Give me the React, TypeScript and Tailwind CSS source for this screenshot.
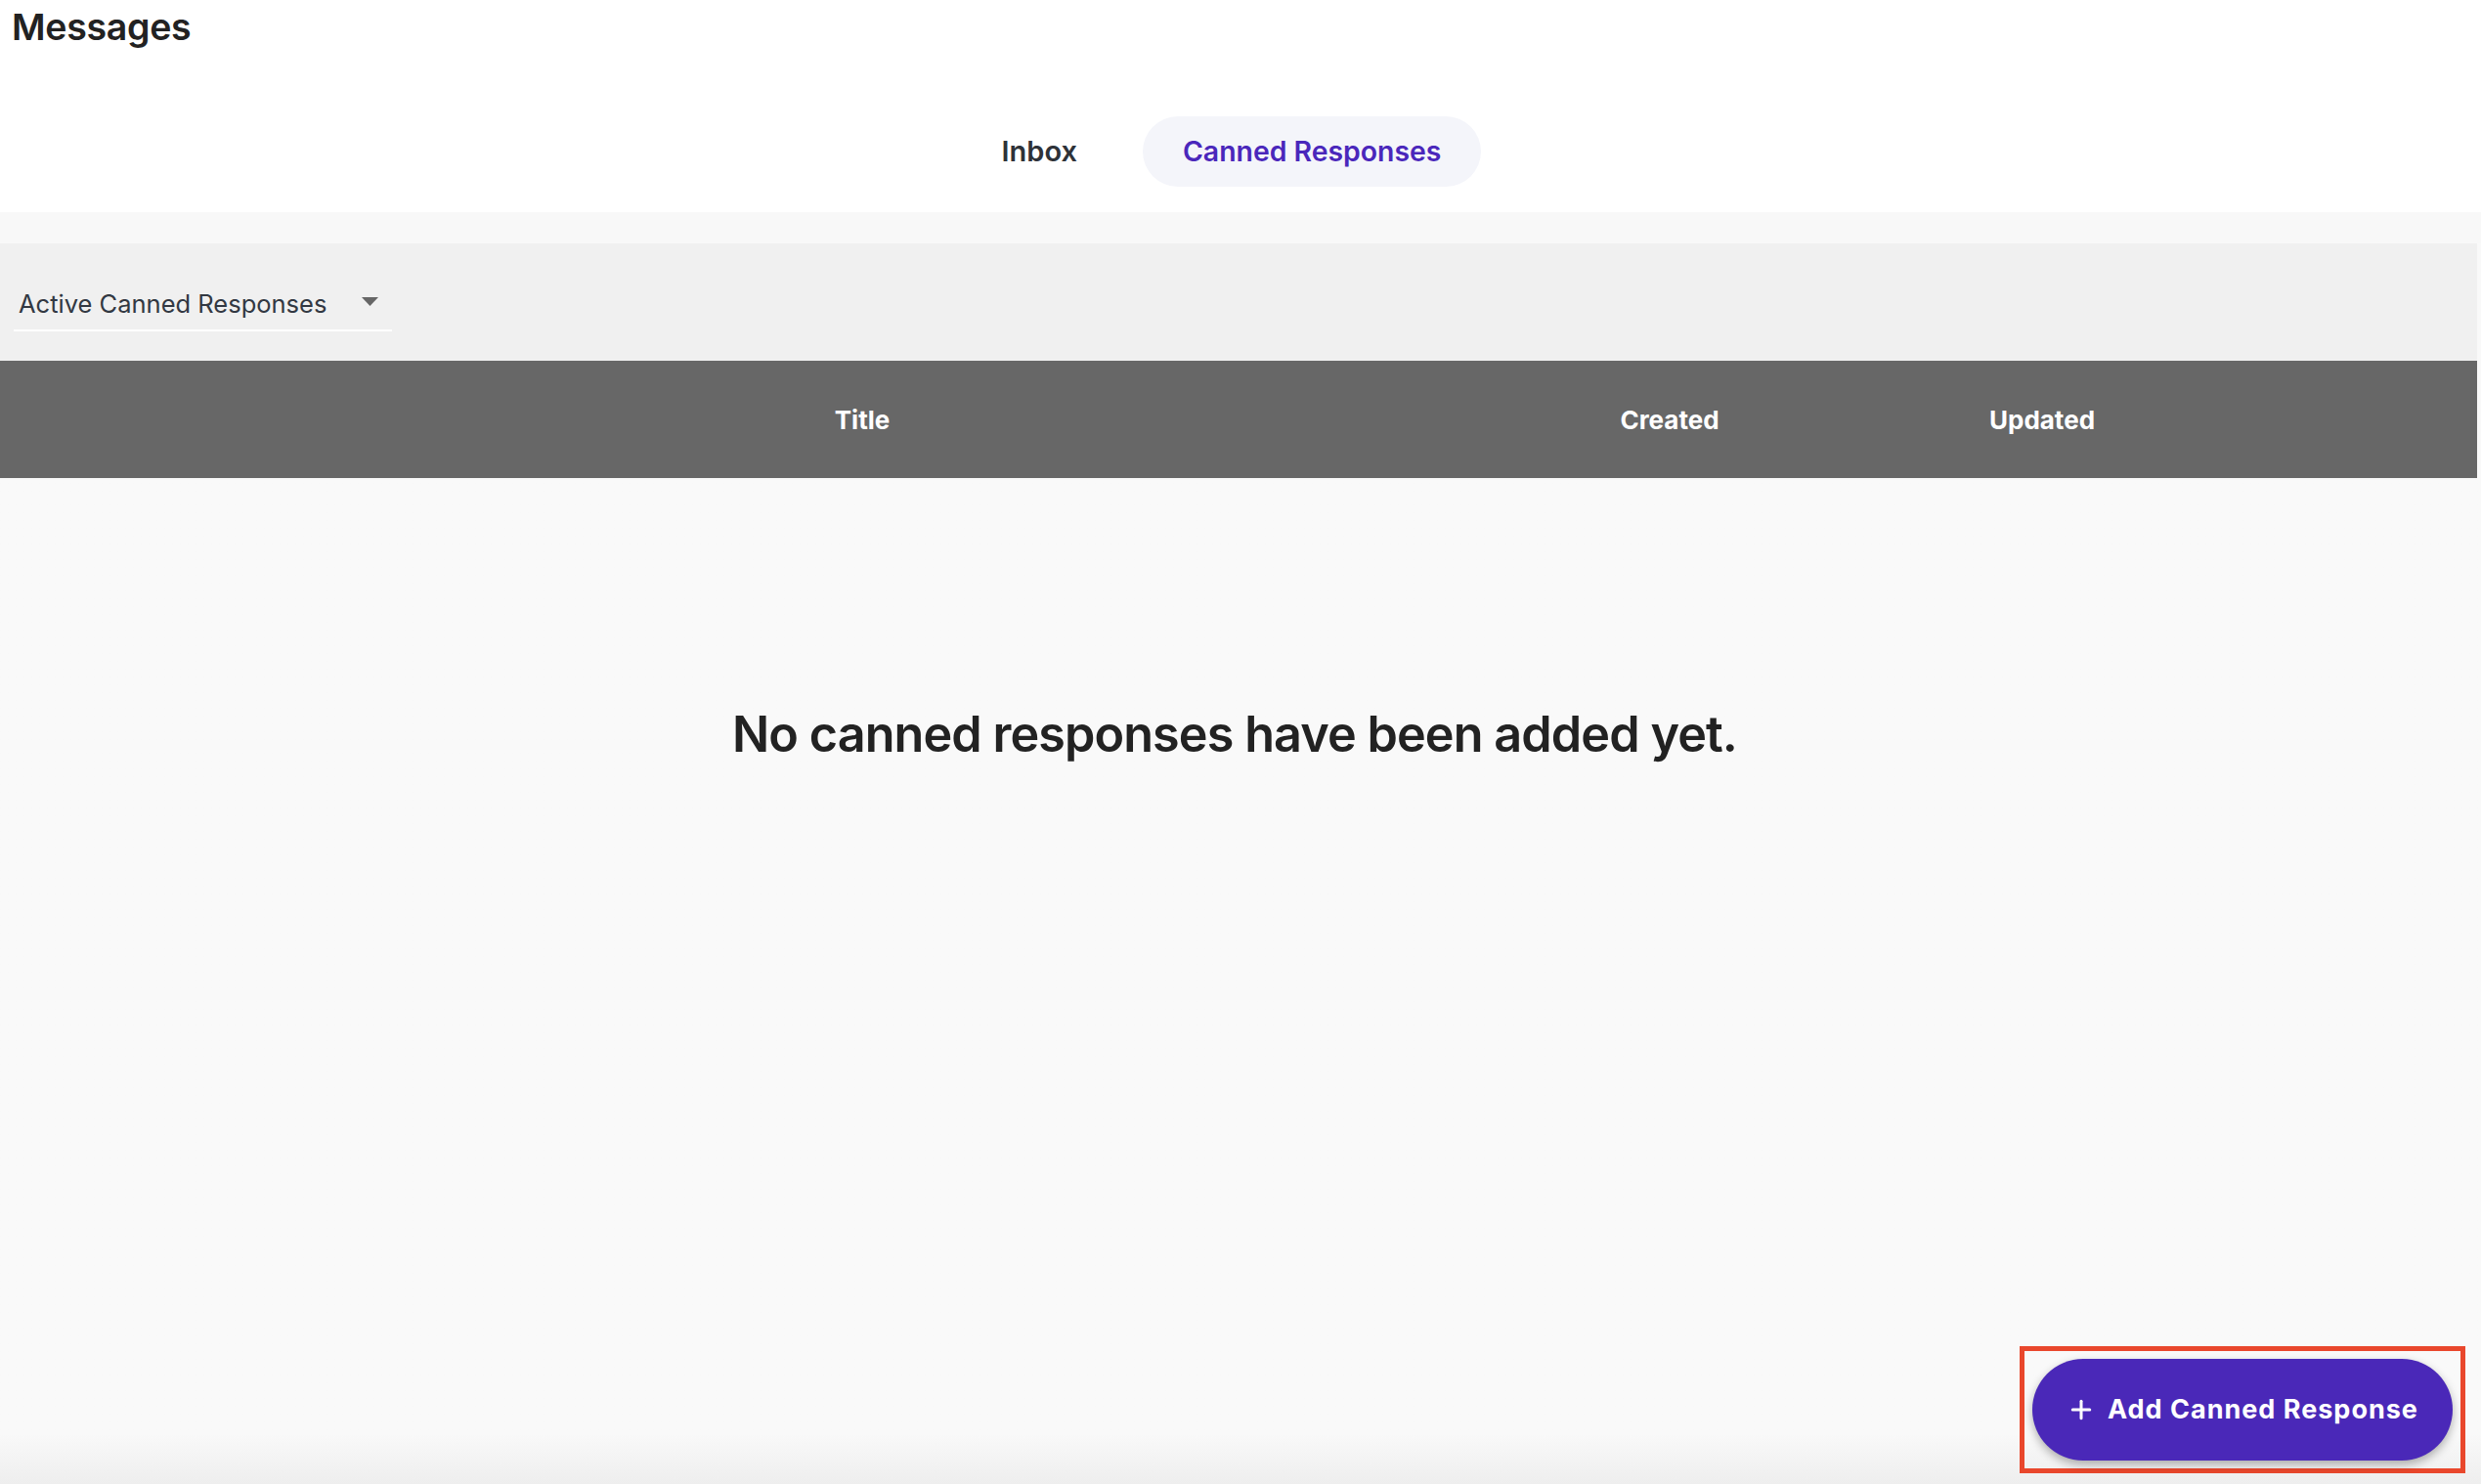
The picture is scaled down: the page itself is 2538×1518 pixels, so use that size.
import { Plus } from "lucide-react";

const font = { fontFamily: "Inter, 'Liberation Sans', sans-serif" };

export default function App() {
  return (
    <div
      className="relative flex h-[1518px] w-full flex-col overflow-hidden bg-[#f9f9f9]"
      style={font}
    >
      {/* Header */}
      <div className="h-[217px] bg-white">
        <h1 className="pl-[12px] pt-[4px] text-[37.5px] font-semibold leading-[48px] tracking-[-0.3px] text-[#222222]">
          Messages
        </h1>
        <div className="mt-[67px] flex items-center justify-center gap-[25px] pr-[40px]">
          <button className="flex h-[72px] items-center rounded-full px-[42px] text-[29px] font-semibold text-[#2e3238]">
            Inbox
          </button>
          <button className="flex h-[72px] items-center rounded-full bg-[#f4f5fa] px-[41px] text-[28.4px] font-semibold text-[#4a27bb]">
            Canned Responses
          </button>
        </div>
      </div>

      <div className="h-[32px] bg-[#f8f8f8]" />

      {/* Filter toolbar */}
      <div className="mr-[4px] flex h-[120px] items-start bg-[#f0f0f0] pl-[14px] pt-[45px]">
        <div className="flex w-[387px] items-center justify-between border-b-2 border-white pb-[9px] pl-[5px] pr-[14px]">
          <span className="text-[25.5px] leading-[34px] text-[#323842]">Active Canned Responses</span>
          <svg width="17" height="9" viewBox="0 0 17 9" className="mb-[6px]">
            <path d="M0 0 H17 L8.5 9 Z" fill="#666666" />
          </svg>
        </div>
      </div>

      {/* Table header */}
      <div className="mr-[4px] flex h-[120px] items-center bg-[#676767] text-[26px] font-bold text-white">
        <div className="w-[244px]" />
        <div className="w-[1276px] text-center">Title</div>
        <div className="w-[376px] text-center">Created</div>
        <div className="w-[386px] text-center">Updated</div>
        <div className="flex-1" />
      </div>

      {/* Empty state */}
      <div className="relative flex-1 bg-gradient-to-b from-[#f9f9f9] from-[95%] to-[#eeeeee]">
        <p className="pr-[12px] pt-[230px] text-center text-[50.3px] font-semibold leading-[64px] tracking-[-0.9px] text-[#222222]">
          No canned responses have been added yet.
        </p>

        <div className="absolute bottom-[11px] right-[16px] border-[5px] border-[#e9472c] p-[8px]">
          <button className="flex h-[104px] w-[430px] items-center justify-center gap-[12px] rounded-full bg-[#4a28b8] text-[27px] font-bold tracking-[1px] text-white shadow-[0_4px_10px_rgba(0,0,0,0.3)]">
            <Plus size={30} strokeWidth={2.4} />
            Add Canned Response
          </button>
        </div>
      </div>
    </div>
  );
}
